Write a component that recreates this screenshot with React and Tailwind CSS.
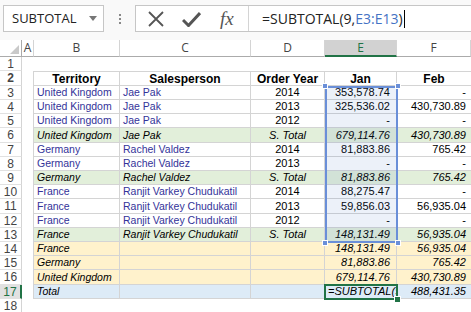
import React from "react";

const COLS = ["A", "B", "C", "D", "E", "F"];

// row kinds: data / sub (green) / reg (orange) / total (blue)
const rows = [
  { n: 3, kind: "data", b: "United Kingdom", c: "Jae Pak", d: "2014", e: "353,578.74", f: "-" },
  { n: 4, kind: "data", b: "United Kingdom", c: "Jae Pak", d: "2013", e: "325,536.02", f: "430,730.89" },
  { n: 5, kind: "data", b: "United Kingdom", c: "Jae Pak", d: "2012", e: "-", f: "-" },
  { n: 6, kind: "sub", b: "United Kingdom", c: "Jae Pak", d: "S. Total", e: "679,114.76", f: "430,730.89" },
  { n: 7, kind: "data", b: "Germany", c: "Rachel Valdez", d: "2014", e: "81,883.86", f: "765.42" },
  { n: 8, kind: "data", b: "Germany", c: "Rachel Valdez", d: "2013", e: "-", f: "-" },
  { n: 9, kind: "sub", b: "Germany", c: "Rachel Valdez", d: "S. Total", e: "81,883.86", f: "765.42" },
  { n: 10, kind: "data", b: "France", c: "Ranjit Varkey Chudukatil", d: "2014", e: "88,275.47", f: "-" },
  { n: 11, kind: "data", b: "France", c: "Ranjit Varkey Chudukatil", d: "2013", e: "59,856.03", f: "56,935.04" },
  { n: 12, kind: "data", b: "France", c: "Ranjit Varkey Chudukatil", d: "2012", e: "-", f: "-" },
  { n: 13, kind: "sub", b: "France", c: "Ranjit Varkey Chudukatil", d: "S. Total", e: "148,131.49", f: "56,935.04" },
  { n: 14, kind: "reg", b: "France", c: "", d: "", e: "148,131.49", f: "56,935.04" },
  { n: 15, kind: "reg", b: "Germany", c: "", d: "", e: "81,883.86", f: "765.42" },
  { n: 16, kind: "reg", b: "United Kingdom", c: "", d: "", e: "679,114.76", f: "430,730.89" },
  { n: 17, kind: "total", b: "Total", c: "", d: "", e: "=SUBTOTAL(9", f: "488,431.35" },
];

const kindBg = {
  data: "bg-white",
  sub: "bg-[#e2efda]",
  reg: "bg-[#fff2cc]",
  total: "bg-[#ddebf7]",
};

const cellFont = { fontFamily: '"Liberation Sans", Arial, sans-serif' };
const uiFont = { fontFamily: '"Open Sans", "Liberation Sans", sans-serif' };

const grid = "grid grid-cols-[22px_12px_86px_131px_74px_72px_1fr]";

const RowHead = ({ n, active, h }) => (
  <div
    className={`${h} flex items-center justify-center border-b border-b-[#e1e1e1] text-[12px] leading-none ${
      active
        ? "bg-[#e1e1e1] text-[#217346] border-r-2 border-r-[#217346]"
        : "bg-white text-[#444] border-r border-r-[#d4d4d4]"
    }`}
    style={cellFont}
  >
    {n}
  </div>
);

export default function App() {
  return (
    <div className="w-[471px] h-[312px] overflow-hidden bg-white relative select-none">
      {/* formula bar */}
      <div className="h-[40px] flex items-start pt-[5px] pl-[3px] bg-[#f9f9f9]" style={uiFont}>
        <div className="w-[101px] h-[27px] bg-white border border-[#c6c6c6] flex items-center pl-[8px] pr-[6px] text-[13px] text-[#222]">
          <span className="flex-1">SUBTOTAL</span>
          <svg width="8" height="5" viewBox="0 0 8 5"><path d="M0 0h8L4 5z" fill="#777" /></svg>
        </div>
        <div className="w-[31px] h-[27px] flex flex-col items-center justify-center gap-[2px]">
          <span className="w-[2px] h-[2px] bg-[#888]" />
          <span className="w-[2px] h-[2px] bg-[#888]" />
          <span className="w-[2px] h-[2px] bg-[#888]" />
        </div>
        <div className="flex-1 h-[27px] bg-white border border-[#c6c6c6] border-r-0 flex items-center">
          <div className="w-[110px] flex items-center">
            <svg className="ml-[11px]" width="18" height="16" viewBox="0 0 18 16">
              <path d="M2 1L16 15M16 1L2 15" stroke="#555" strokeWidth="1.8" fill="none" />
            </svg>
            <svg className="ml-[17px]" width="19" height="16" viewBox="0 0 19 16">
              <path d="M1 9L6.5 14.5L18 2" stroke="#555" strokeWidth="3" fill="none" />
            </svg>
            <span
              className="ml-[19px] text-[19px] italic text-[#555] leading-none"
              style={{ fontFamily: '"Liberation Serif", serif' }}
            >
              fx
            </span>
          </div>
          <div className="w-px h-[25px] bg-[#d4d4d4] ml-[2px]" />
          <div className="pl-[13px] text-[14px] text-[#222] flex items-center">
            <span>=SUBTOTAL(9,</span>
            <span className="text-[#4472c4]">E3:E13</span>
            <span>)</span>
            <span className="w-px h-[18px] bg-black ml-px" />
          </div>
        </div>
      </div>

      {/* column headers */}
      <div className={`${grid} h-[17px] text-[12px] leading-none text-[#444] bg-white`} style={uiFont}>
        <div className="border-r border-b border-[#ababab] flex items-end justify-end p-[2px]">
          <svg width="9" height="9" viewBox="0 0 9 9"><path d="M9 0V9H0z" fill="#c9c9c9" /></svg>
        </div>
        {COLS.map((c) => (
          <div
            key={c}
            className={`flex items-center justify-center border-r border-[#d4d4d4] ${
              c === "E" ? "bg-[#d2d2d2] text-[#217346] border-b-2 border-b-[#217346]" : "border-b border-b-[#ababab]"
            }`}
          >
            {c}
          </div>
        ))}
      </div>

      {/* sheet */}
      <div className="relative" style={cellFont}>
        {/* row 1 */}
        <div className={`${grid} h-[14px]`}>
          <RowHead n={1} h="h-[14px]" />
          <div className="col-span-6" />
        </div>
        {/* row 2: headers */}
        <div className={`${grid} h-[15px] text-[12px] leading-none font-bold text-black`}>
          <RowHead n={2} h="h-[15px]" />
          <div className="border-r border-[#d4d4d4]" />
          <div className="border-t border-r border-b border-[#d4d4d4] flex items-center justify-center">Territory</div>
          <div className="border-t border-r border-b border-[#d4d4d4] flex items-center justify-center">Salesperson</div>
          <div className="border-t border-r border-b border-[#d4d4d4] flex items-center justify-center">Order Year</div>
          <div className="border-t border-r border-b border-[#d4d4d4] flex items-center justify-center">Jan</div>
          <div className="border-t border-b border-[#d4d4d4] w-[74px] flex items-center justify-center">Feb</div>
        </div>
        {rows.map((r) => {
          const h = r.n === 6 || r.n === 11 || r.n === 16 ? "h-[15px]" : "h-[14px]";
          const it = r.kind !== "data" ? "italic" : "";
          const blue = r.kind === "data" ? "text-[#333399]" : "text-black";
          const bg = kindBg[r.kind];
          const cell = `border-r border-b border-[#d4d4d4] ${bg} flex items-center leading-none overflow-hidden whitespace-nowrap`;
          return (
            <div key={r.n} className={`${grid} ${h}`}>
              <RowHead n={r.n} h={h} active={r.n === 17} />
              <div className="border-r border-[#d4d4d4]" />
              <div className={`${cell} text-[10.5px] ${blue} ${it} pl-[3px]`}>{r.b}</div>
              <div className={`${cell} text-[10.5px] ${blue} ${it} pl-[3px]`}>{r.c}</div>
              <div className={`${cell} text-[11px] text-black ${it} justify-center`}>{r.d}</div>
              <div
                className={`${cell} text-[11px] text-black ${it} ${
                  r.n === 17 ? "justify-start pl-[3px]" : "justify-end pr-[6px]"
                }`}
              >
                {r.e}
              </div>
              <div className={`${cell} text-[11px] w-[74px] border-r-0 text-black ${it} justify-end pr-[5px]`}>
                {r.f}
              </div>
            </div>
          );
        })}
        {/* row 18 */}
        <div className={`${grid} h-[14px]`}>
          <RowHead n={18} h="h-[14px]" />
          <div className="col-span-6" />
        </div>

        {/* reference highlight E3:E13 */}
        <div className="absolute left-[325px] top-[29px] w-[73px] h-[157px] border-2 border-[#6a8fd8] bg-[#4472c4]/10 pointer-events-none" />
        <div className="absolute left-[322px] top-[26px] w-[6px] h-[6px] bg-[#6a8fd8] border border-white" />
        <div className="absolute left-[395px] top-[26px] w-[6px] h-[6px] bg-[#6a8fd8] border border-white" />
        <div className="absolute left-[322px] top-[183px] w-[6px] h-[6px] bg-[#6a8fd8] border border-white" />
        <div className="absolute left-[395px] top-[183px] w-[6px] h-[6px] bg-[#6a8fd8] border border-white" />

        {/* active cell E17 */}
        <div className="absolute left-[324px] top-[227px] w-[74px] h-[16px] border-2 border-[#217346] pointer-events-none" />
        <div className="absolute left-[394px] top-[239px] w-[7px] h-[7px] bg-[#217346] border border-white" />
      </div>
    </div>
  );
}
